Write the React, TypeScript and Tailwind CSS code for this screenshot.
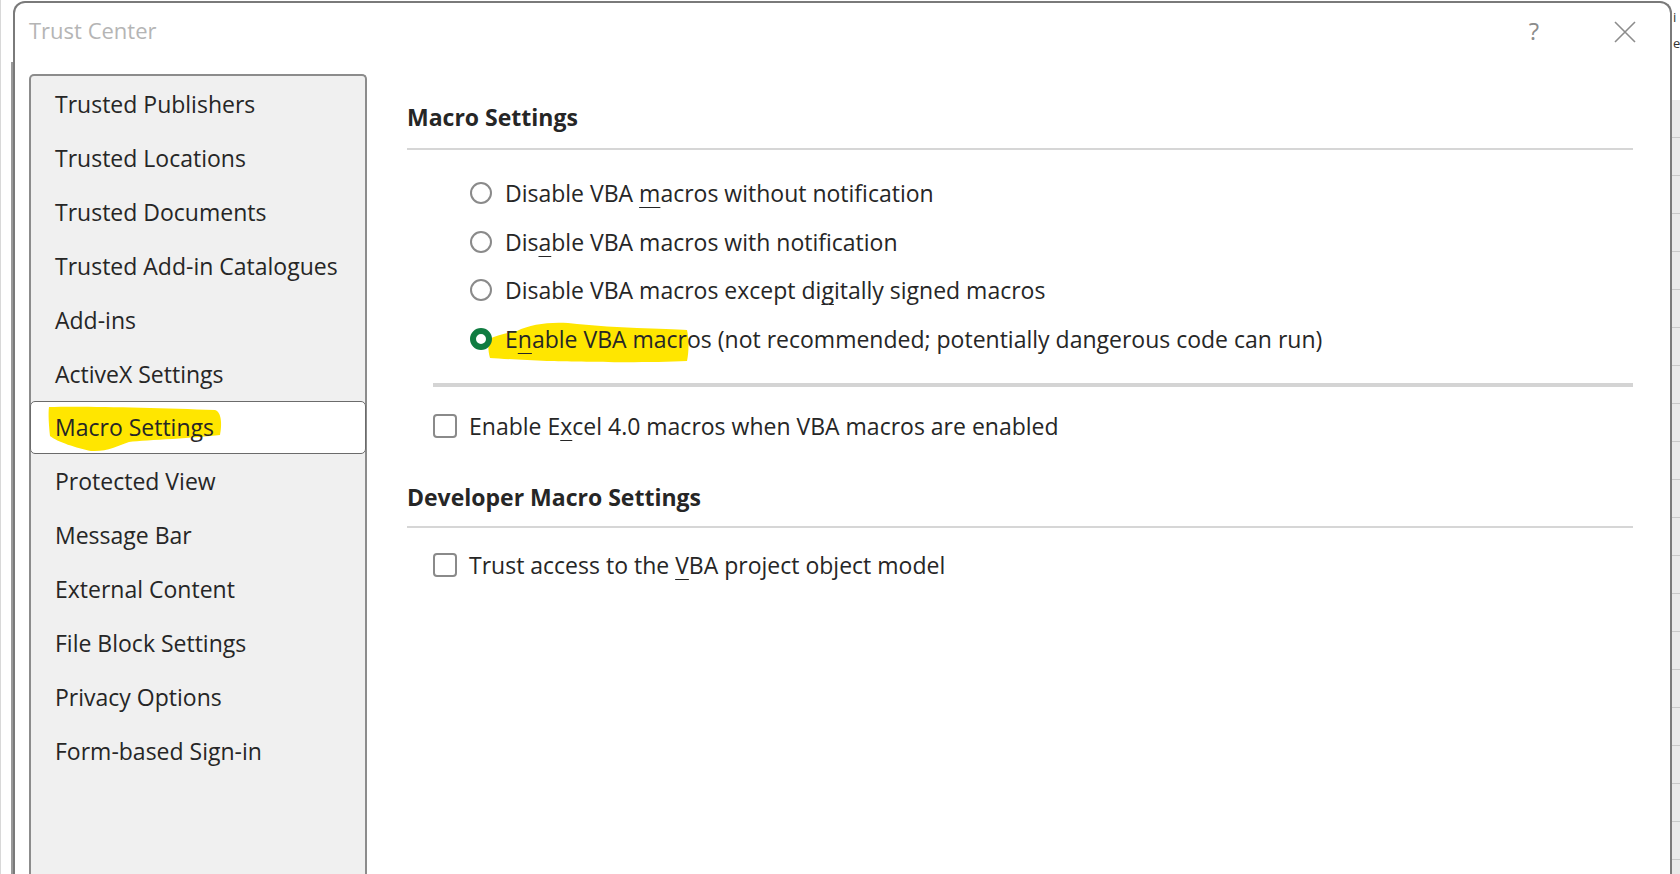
import React from 'react';

const navItems = [
  'Trusted Publishers',
  'Trusted Locations',
  'Trusted Documents',
  'Trusted Add-in Catalogues',
  'Add-ins',
  'ActiveX Settings',
  'Macro Settings',
  'Protected View',
  'Message Bar',
  'External Content',
  'File Block Settings',
  'Privacy Options',
  'Form-based Sign-in',
];

function Radio({ checked }: { checked?: boolean }) {
  if (checked) {
    return (
      <span className="relative z-10 w-[22px] h-[22px] rounded-full border-[6px] border-[#107c41] bg-white shrink-0" />
    );
  }
  return <span className="w-[22px] h-[22px] rounded-full border-2 border-[#8a8a8a] bg-white shrink-0" />;
}

function Checkbox() {
  return <span className="w-[24px] h-[24px] rounded-[4px] border-2 border-[#8a8a8a] bg-white shrink-0" />;
}

function U({ children }: { children: React.ReactNode }) {
  return <span className="underline underline-offset-[5px] decoration-1">{children}</span>;
}

export default function App() {
  return (
    <div className="w-[1680px] h-[874px] overflow-hidden bg-white flex font-['Open_Sans',sans-serif] text-[#262626]">
      {/* window behind, left edge */}
      <div className="w-[13px] shrink-0 flex">
        <div className="w-[1px] bg-[#d8d8d8]" />
        <div className="flex-1" />
        <div className="w-[2px] mt-[62px] bg-[#9a9a9a]" />
      </div>

      {/* dialog */}
      <div className="flex-1 flex flex-col mt-[1px] border-2 border-b-0 border-[#7a7a7a] rounded-t-[12px] bg-white min-w-0">
        {/* title bar */}
        <div className="h-[71px] shrink-0 flex items-start">
          <div className="pl-[14px] pt-[12px] text-[22px] leading-[30px] text-[#b5b5b5]">Trust Center</div>
          <div className="ml-auto flex items-center pt-[13px] pr-[34px] gap-[75px]">
            <span className="text-[24px] leading-[30px] text-[#8c8c8c]">?</span>
            <svg width="22" height="22" viewBox="0 0 22 22" className="mt-[1px]">
              <path d="M1 1 L21 21 M21 1 L1 21" stroke="#8c8c8c" strokeWidth="1.6" fill="none" />
            </svg>
          </div>
        </div>

        {/* body */}
        <div className="flex flex-1 min-h-0">
          {/* sidebar */}
          <div className="ml-[14px] w-[338px] shrink-0 border-2 border-b-0 border-[#8c8c8c] rounded-t-[5px] bg-[#f0f0f0] pt-[1px]">
            {navItems.map((item) =>
              item === 'Macro Settings' ? (
                <div
                  key={item}
                  className="relative h-[53px] mx-[-1px] flex items-center pl-[24px] bg-white border-[1.5px] border-[#6b6b6b] rounded-[5px] text-[23px]"
                >
                  <svg className="absolute left-[16px] top-[2px]" width="176" height="50" viewBox="0 0 176 50">
                    <path
                      d="M2 3 C40 2 110 4 168 6 C175 8 175 22 173 31 C150 34 100 36 82 38 C70 42 60 48 44 47 C30 44 10 38 3 32 C2 22 1 10 2 3 Z"
                      fill="#ffe600"
                    />
                  </svg>
                  <span className="relative">Macro Settings</span>
                </div>
              ) : (
                <div key={item} className="h-[54px] flex items-center pl-[24px] text-[23px]">
                  {item}
                </div>
              )
            )}
          </div>

          {/* content */}
          <div className="ml-[40px] w-[1226px] shrink-0 text-[23px]">
            <div className="mt-[28px] h-[30px] flex items-center font-bold">Macro Settings</div>
            <div className="mt-[16px] h-[2px] bg-[#d6d6d6]" />

            <div className="mt-[19px] pl-[63px]">
              <div className="h-[48.5px] flex items-center gap-[13px]">
                <Radio />
                <span>
                  Disable VBA <U>m</U>acros without notification
                </span>
              </div>
              <div className="h-[48.5px] flex items-center gap-[13px]">
                <Radio />
                <span>
                  Dis<U>a</U>ble VBA macros with notification
                </span>
              </div>
              <div className="h-[48.5px] flex items-center gap-[13px]">
                <Radio />
                <span>
                  Disable VBA macros except di<U>g</U>itally signed macros
                </span>
              </div>
              <div className="relative h-[48.5px] flex items-center gap-[13px]">
                <svg className="absolute left-[17px] top-[6px]" width="205" height="42" viewBox="0 0 205 42">
                  <path
                    d="M2 18 C10 14 20 12 30 10 C45 2 70 0 90 3 C110 5 130 6 150 7 C170 8 190 8 200 9 C202 18 202 30 200 40 C160 42 90 41 60 40 C40 39 15 38 3 37 C1 30 1 24 2 18 Z"
                    fill="#ffe600"
                  />
                </svg>
                <Radio checked />
                <span className="relative">
                  E<U>n</U>able VBA macros (not recommended; potentially dangerous code can run)
                </span>
              </div>
            </div>

            <div className="mt-[20px] ml-[26px] h-[4px] bg-[#d4d4d4]" />

            <div className="mt-[15px] ml-[26px] h-[48px] flex items-center gap-[12px]">
              <Checkbox />
              <span>
                Enable E<U>x</U>cel 4.0 macros when VBA macros are enabled
              </span>
            </div>

            <div className="mt-[32px] h-[30px] flex items-center font-bold">Developer Macro Settings</div>
            <div className="mt-[14px] h-[2px] bg-[#d6d6d6]" />

            <div className="mt-[13px] ml-[26px] h-[48px] flex items-center gap-[12px]">
              <Checkbox />
              <span>
                Trust access to the <U>V</U>BA project object model
              </span>
            </div>
          </div>
        </div>
      </div>

      {/* window behind, right edge */}
      <div className="w-[8px] shrink-0 flex flex-col bg-[#e9e9e9]">
        <div className="h-[100px] bg-white text-[13px] leading-[26px] text-[#333] pl-[1px]">
          <div className="mt-[4px]">i</div>
          <div>e</div>
        </div>
        {[0, 1, 2, 3, 4, 5, 6, 7, 8, 9, 10, 11, 12, 13, 14, 15, 16, 17, 18, 19].map((i) => (
          <div key={i} className="h-[38px] border-b border-[#c8c8c8]" />
        ))}
      </div>
    </div>
  );
}
